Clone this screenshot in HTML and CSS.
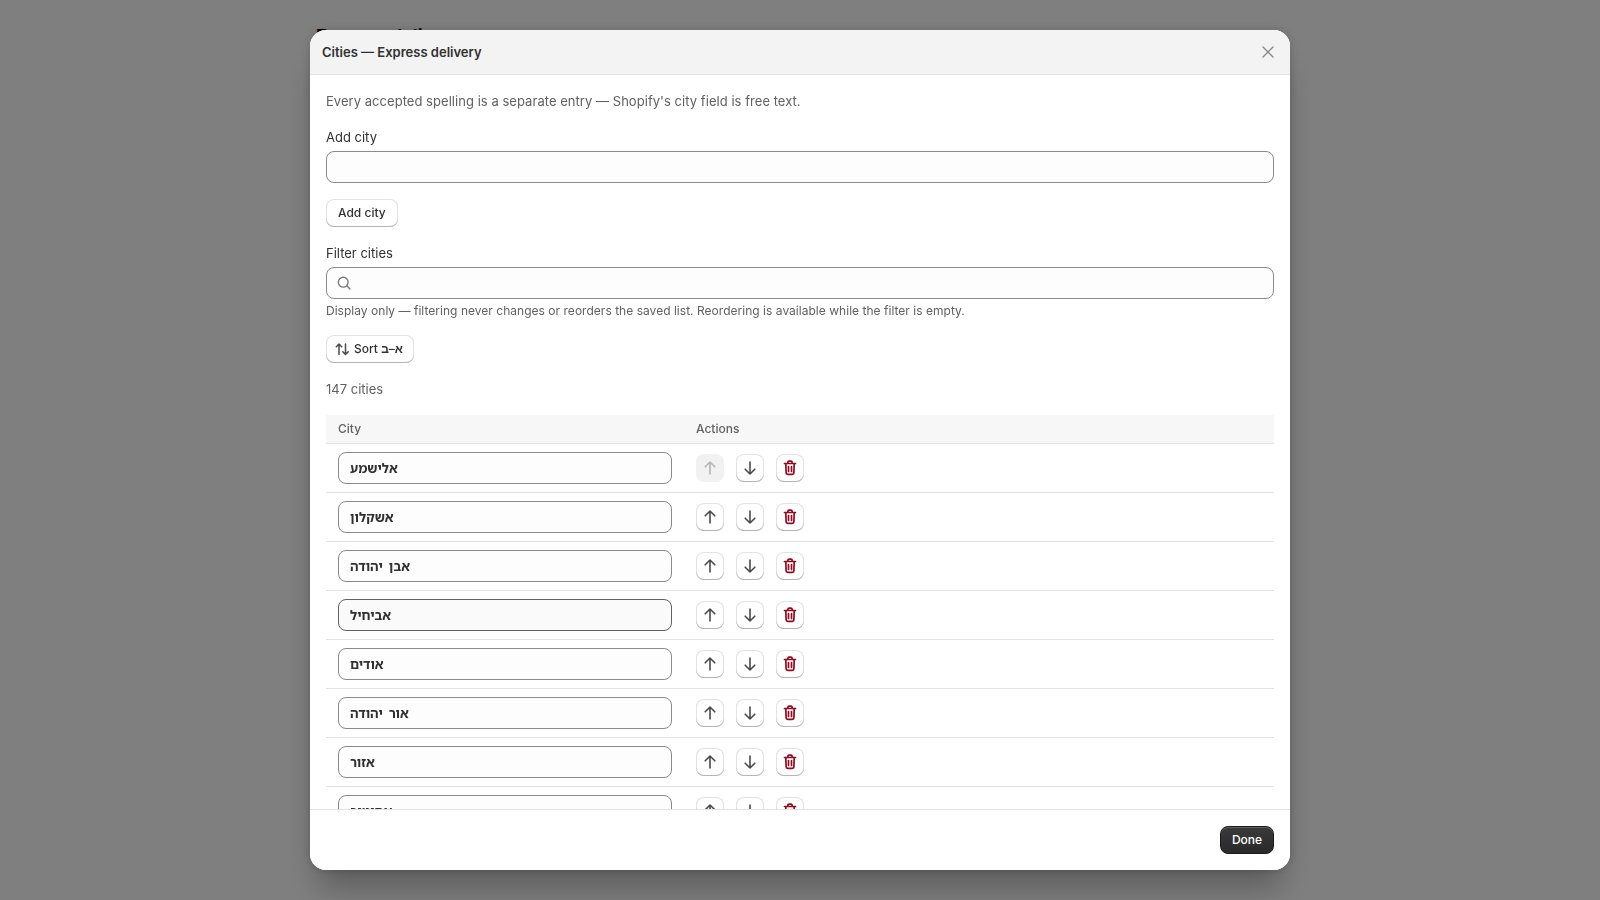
FILE: index.html
```html
<!DOCTYPE html>
<html lang="en">
<head>
    <meta charset="UTF-8">
    <meta name="viewport" content="width=device-width, initial-scale=1.0">
    <title>Express delivery</title>
    <link rel="stylesheet" href="styles.css">
</head>
<body>
    <!-- Page behind the dialog -->
    <div class="page">
        <h1 class="page-title">Express delivery</h1>
    </div>

    <div class="backdrop">
        <div class="modal">
            <div class="modal-header">
                <h2>Cities — Express delivery</h2>
                <button type="button" class="close-btn" aria-label="Close">
                    <svg width="20" height="20" viewBox="0 0 20 20"><path d="M5 5l10 10M15 5L5 15" class="icon-line light"/></svg>
                </button>
            </div>

            <div class="modal-body">
                <p class="intro">Every accepted spelling is a separate entry — Shopify's city field is free text.</p>

                <div class="form-group">
                    <label for="addCity">Add city</label>
                    <input type="text" id="addCity" class="text-input">
                </div>
                <button type="button" class="btn add-btn">Add city</button>

                <div class="form-group filter-group">
                    <label for="filterCities">Filter cities</label>
                    <div class="search-field">
                        <svg width="20" height="20" viewBox="0 0 20 20"><circle cx="9.2" cy="9.2" r="4.9" class="icon-line"/><path d="M12.8 12.8l3.2 3.2" class="icon-line"/></svg>
                        <input type="text" id="filterCities">
                    </div>
                    <p class="help">Display only — filtering never changes or reorders the saved list. Reordering is available while the filter is empty.</p>
                </div>

                <button type="button" class="btn sort-btn">
                    <svg width="16" height="16" viewBox="0 0 16 16"><path d="M5 13.5V3M2.3 5.7L5 3l2.7 2.7M11.5 3v10.5M8.8 10.8l2.7 2.7 2.7-2.7" class="icon-sort"/></svg>
                    <span>Sort א–ב</span>
                </button>

                <p class="count">147 cities</p>

                <table class="city-table">
                    <thead>
                        <tr><th class="city-col">City</th><th>Actions</th></tr>
                    </thead>
                    <tbody id="cityRows"></tbody>
                </table>
            </div>

            <div class="modal-footer">
                <button type="button" class="done-btn">Done</button>
            </div>
        </div>
    </div>

    <script>
        const cities = ["אלישמע", "אשקלון", "אבן יהודה", "אביחיל", "אודים", "אור יהודה", "אזור", "אחיטוב"];

        const upIcon = '<svg width="20" height="20" viewBox="0 0 20 20"><path d="M10 16V4M5.2 8.8L10 4l4.8 4.8" class="icon-arrow"/></svg>';
        const downIcon = '<svg width="20" height="20" viewBox="0 0 20 20"><path d="M10 4v12M5.2 11.2L10 16l4.8-4.8" class="icon-arrow"/></svg>';
        const trashIcon = '<svg width="20" height="20" viewBox="0 0 20 20"><path d="M4.5 5.5h11M7.8 5.5V4.6c0-.9.6-1.5 1.4-1.5h1.6c.8 0 1.4.6 1.4 1.5v.9M5.8 5.5l.3 9.3c0 1 .7 1.6 1.6 1.6h4.6c.9 0 1.6-.6 1.6-1.6l.3-9.3M8.5 8.5v5M11.5 8.5v5" class="icon-trash"/></svg>';

        const tbody = document.getElementById("cityRows");
        cities.forEach((city, i) => {
            const row = document.createElement("tr");
            // the fourth input sits under the pointer in this state
            row.innerHTML = `
                <td class="city-col"><input type="text" class="text-input city-input ${i === 3 ? "is-hovered" : ""}" value="${city}"></td>
                <td><div class="row-actions">
                    <button type="button" class="icon-btn" ${i === 0 ? "disabled" : ""}>${upIcon}</button>
                    <button type="button" class="icon-btn">${downIcon}</button>
                    <button type="button" class="icon-btn">${trashIcon}</button>
                </div></td>`;
            tbody.appendChild(row);
        });
    </script>
</body>
</html>
```

FILE: styles.css
```css
/* General Styles */
* {
    box-sizing: border-box;
}

body {
    font-family: 'Inter', 'Noto Sans', sans-serif;
    margin: 0;
    height: 100vh;
    overflow: hidden;
    background-color: #fff;
    color: #303030;
    font-size: 13px;
    line-height: 20px;
}

button,
input {
    font-family: inherit;
}

.page {
    padding: 24px 316px;
}

.page-title {
    margin: 0;
    font-size: 18px;
    line-height: 24px;
    font-weight: 700;
    color: #000;
}

/* Dialog */
.backdrop {
    position: fixed;
    inset: 0;
    background-color: rgba(0, 0, 0, 0.5);
    display: flex;
    justify-content: center;
    align-items: center;
}

.modal {
    width: 980px;
    height: 840px;
    background-color: #fff;
    border-radius: 16px;
    overflow: hidden;
    display: flex;
    flex-direction: column;
    box-shadow: 0 26px 32px -8px rgba(0, 0, 0, 0.28), 0 0 10px rgba(0, 0, 0, 0.2);
}

.modal-header {
    flex: none;
    height: 45px;
    display: flex;
    align-items: center;
    justify-content: space-between;
    padding: 0 12px;
    background-color: #f3f3f3;
    border-bottom: 1px solid #e3e3e3;
}

.modal-header h2 {
    margin: 0;
    font-size: 13px;
    line-height: 20px;
    font-weight: 600;
}

.close-btn {
    width: 20px;
    height: 20px;
    padding: 0;
    border: none;
    background: none;
}

.modal-body {
    flex: 1;
    min-height: 0;
    overflow: hidden;
    padding: 16px;
}

.intro,
.count {
    margin: 0;
    font-size: 13px;
    color: #616161;
}

.intro {
    letter-spacing: 0.04px;
}

.form-group label {
    display: block;
    font-size: 13px;
    margin-bottom: 4px;
}

.form-group {
    margin-top: 16px;
}

.text-input,
.search-field {
    width: 100%;
    height: 32px;
    border: 1px solid #8a8a8a;
    border-radius: 8px;
    background-color: #fdfdfd;
}

.text-input {
    display: block;
    padding: 0 11px;
    font-size: 13px;
    color: #303030;
    outline: none;
}

.text-input.is-hovered {
    border-color: #616161;
    background-color: #fafafa;
}

.search-field {
    display: flex;
    align-items: center;
    gap: 2px;
    padding: 0 7px;
}

.search-field input {
    flex: 1;
    border: none;
    background: none;
    outline: none;
}

.help {
    margin: 4px 0 0;
    font-size: 12px;
    line-height: 16px;
    letter-spacing: 0.026px;
    color: #616161;
}

/* Buttons */
.btn {
    display: flex;
    align-items: center;
    height: 28px;
    padding: 0 12px 1px;
    font-size: 12px;
    font-weight: 550;
    color: #303030;
    background-color: #fff;
    border: none;
    border-radius: 8px;
    box-shadow: inset 0 -1px 0 #b5b5b5, inset 0 0 0 1px #e3e3e3;
}

.add-btn {
    margin-top: 16px;
    width: 72px;
}

.filter-group {
    margin-top: 16px;
}

.sort-btn {
    margin-top: 16px;
    gap: 4px;
    padding: 0 11px 1px 8px;
}

.count {
    margin-top: 16px;
}

/* City table */
.city-table {
    width: 100%;
    margin-top: 16px;
    border-collapse: collapse;
    table-layout: fixed;
}

.city-table th {
    height: 28px;
    padding: 0 12px;
    font-size: 12px;
    font-weight: 500;
    text-align: left;
    color: #616161;
    background-color: #f7f7f7;
    border-bottom: 1px solid #e3e3e3;
}

.city-table td {
    height: 49px;
    padding: 0 12px;
    border-bottom: 1px solid #e3e3e3;
}

.city-col {
    width: 358px;
}

.city-input {
    font-family: 'Inter', 'Noto Sans Hebrew', sans-serif;
    font-weight: 700;
    word-spacing: 3px;
}

.row-actions {
    display: flex;
    gap: 12px;
}

.icon-btn {
    width: 28px;
    height: 28px;
    padding: 0;
    display: flex;
    align-items: center;
    justify-content: center;
    background-color: #fff;
    border: none;
    border-radius: 8px;
    box-shadow: inset 0 -1px 0 #b5b5b5, inset 0 0 0 1px #e3e3e3;
}

.icon-btn:disabled {
    background-color: #f1f1f1;
    box-shadow: none;
}

.icon-btn:disabled .icon-arrow {
    stroke: #b5b5b5;
}

/* Icons */
.icon-line {
    fill: none;
    stroke: #7a7a7a;
    stroke-width: 1.4;
    stroke-linecap: round;
    stroke-linejoin: round;
}

.icon-line.light {
    stroke: #8a8a8a;
}

.icon-sort {
    fill: none;
    stroke: #4a4a4a;
    stroke-width: 1.5;
    stroke-linecap: round;
    stroke-linejoin: round;
}

.icon-arrow {
    fill: none;
    stroke: #4a4a4a;
    stroke-width: 1.6;
    stroke-linecap: round;
    stroke-linejoin: round;
}

.icon-trash {
    fill: none;
    stroke: #8e0b21;
    stroke-width: 1.7;
    stroke-linecap: round;
    stroke-linejoin: round;
}

/* Footer */
.modal-footer {
    flex: none;
    height: 61px;
    display: flex;
    align-items: center;
    justify-content: flex-end;
    padding: 0 16px;
    background-color: #fff;
    border-top: 1px solid #e3e3e3;
}

.done-btn {
    height: 28px;
    width: 54px;
    padding: 0 0 1px;
    font-size: 12px;
    font-weight: 550;
    color: #fff;
    background: linear-gradient(#3a3a3a, #2a2a2a);
    border: 1px solid #1a1a1a;
    border-radius: 8px;
    box-shadow: inset 0 1px 0 rgba(255, 255, 255, 0.2);
}
```
